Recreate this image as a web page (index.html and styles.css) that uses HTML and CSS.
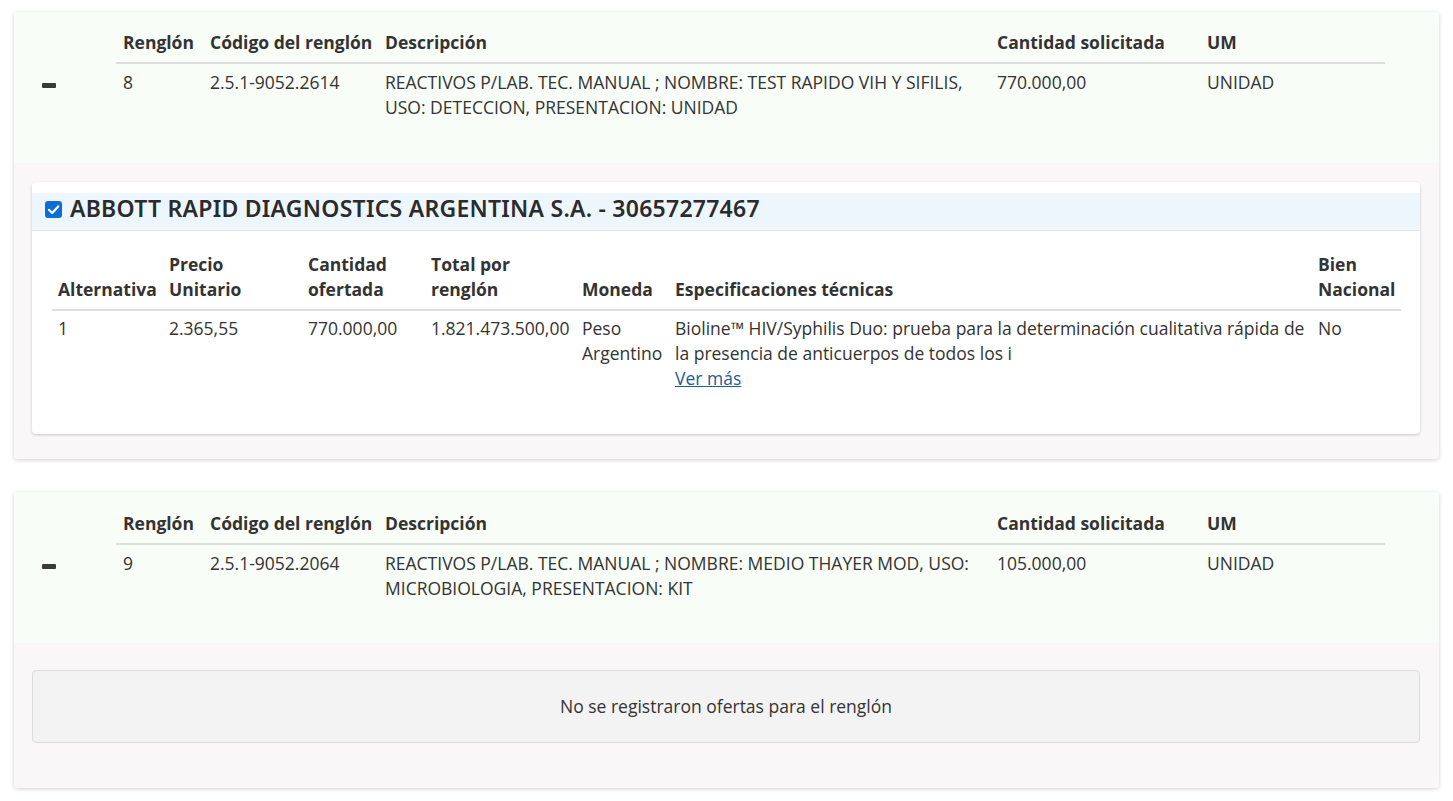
FILE: index.html
```html
<!DOCTYPE html>
<html lang="es">
<head>
<meta charset="utf-8">
<title>Renglones</title>
<link rel="stylesheet" href="styles.css">
</head>
<body>
<div class="item-card">
  <div class="item-head">
    <div class="toggle"><span class="minus"></span></div>
    <table class="item-table">
      <colgroup><col class="c1"><col class="c2"><col class="c3"><col class="c4"><col></colgroup>
      <thead><tr><th>Renglón</th><th>Código del renglón</th><th>Descripción</th><th>Cantidad solicitada</th><th>UM</th></tr></thead>
      <tbody><tr><td>8</td><td>2.5.1-9052.2614</td><td>REACTIVOS P/LAB. TEC. MANUAL ; NOMBRE: TEST RAPIDO VIH Y SIFILIS, USO: DETECCION, PRESENTACION: UNIDAD</td><td>770.000,00</td><td>UNIDAD</td></tr></tbody>
    </table>
  </div>
  <div class="item-body">
    <div class="offer-card">
      <div class="offer-title">
        <span class="check"><svg width="17" height="17" viewBox="0 0 17 17"><rect x="0" y="0" width="17" height="17" rx="3" fill="#0b6ed8"/><path d="M4 8.8 L7.2 12 L13.2 5.4" fill="none" stroke="#fff" stroke-width="2.2" stroke-linecap="round" stroke-linejoin="round"/></svg></span>
        <span class="offer-name">ABBOTT RAPID DIAGNOSTICS ARGENTINA S.A. - 30657277467</span>
      </div>
      <table class="offer-table">
        <colgroup><col class="o1"><col class="o2"><col class="o3"><col class="o4"><col class="o5"><col class="o6"><col></colgroup>
        <thead><tr><th>Alternativa</th><th>Precio Unitario</th><th>Cantidad ofertada</th><th>Total por renglón</th><th>Moneda</th><th>Especificaciones técnicas</th><th>Bien Nacional</th></tr></thead>
        <tbody><tr><td>1</td><td>2.365,55</td><td>770.000,00</td><td>1.821.473.500,00</td><td>Peso Argentino</td><td class="spec">Bioline™ HIV/Syphilis Duo: prueba para la determinación cualitativa rápida de<br>la presencia de anticuerpos de todos los i<br><a href="#" class="more">Ver más</a></td><td>No</td></tr></tbody>
      </table>
    </div>
  </div>
</div>

<div class="item-card second">
  <div class="item-head">
    <div class="toggle"><span class="minus"></span></div>
    <table class="item-table">
      <colgroup><col class="c1"><col class="c2"><col class="c3"><col class="c4"><col></colgroup>
      <thead><tr><th>Renglón</th><th>Código del renglón</th><th>Descripción</th><th>Cantidad solicitada</th><th>UM</th></tr></thead>
      <tbody><tr><td>9</td><td>2.5.1-9052.2064</td><td>REACTIVOS P/LAB. TEC. MANUAL ; NOMBRE: MEDIO THAYER MOD, USO: MICROBIOLOGIA, PRESENTACION: KIT</td><td>105.000,00</td><td>UNIDAD</td></tr></tbody>
    </table>
  </div>
  <div class="item-body empty">
    <div class="no-offers">No se registraron ofertas para el renglón</div>
  </div>
</div>
</body>
</html>
```

FILE: styles.css
```css
* { box-sizing: border-box; }
html, body { margin: 0; padding: 0; background: #ffffff; }
body {
  font-family: "Open Sans", "Noto Sans", sans-serif;
  font-size: 17.5px;
  line-height: 25px;
  color: #333333;
  padding: 12px 14px 0 14px;
}
.item-card {
  border-radius: 4px;
  box-shadow: 0 1px 4px rgba(0,0,0,0.18);
  overflow: hidden;
  margin-bottom: 33px;
}
.item-head {
  background: #f8fdf8;
  display: flex;
  height: 151px;
  padding: 10px 54px 0 0;
}
.second .item-head { padding-top: 11px; }
.toggle { width: 102px; flex: none; padding: 61px 0 0 28px; }
.minus {
  display: block;
  width: 14px;
  height: 5px;
  border-radius: 1px;
  background: #3a3a3a;
}
table { border-collapse: collapse; table-layout: fixed; }
th { text-align: left; font-weight: 700; vertical-align: bottom; }
td { vertical-align: top; }
.item-table { width: 1269px; }
.item-table th { padding: 8px 7px 7px; border-bottom: 2px solid #dedede; white-space: nowrap; }
.item-table td { padding: 6px 7px 8px; }
.c1 { width: 87px; }
.c2 { width: 175px; }
.c3 { width: 612px; }
.c4 { width: 210px; }

.item-body { background: #f9f7f7; padding: 19px 19px 25px 18px; }
.offer-card {
  background: #ffffff;
  border-radius: 4px;
  box-shadow: 0 1px 3px rgba(0,0,0,0.2);
  padding: 11px 0 35px 0;
}
.offer-title {
  display: flex;
  align-items: flex-start;
  gap: 8px;
  background: #eef6fd;
  border-bottom: 1px solid #dde6ee;
  height: 38px;
  padding-left: 13px;
}
.check { display: flex; width: 17px; height: 17px; margin-top: 8px; }
.offer-name {
  font-family: "Noto Sans", "Open Sans", sans-serif;
  font-weight: 600;
  font-size: 23px;
  letter-spacing: 0.25px;
  color: #2b2b2b;
  line-height: 30px;
}
.offer-table { width: 1349px; margin: 14px 0 0 20px; }
.offer-table th { padding: 7px 6px; border-bottom: 2px solid #dedede; }
.offer-table td { padding: 5px 6px 8px; }
.offer-table .spec { white-space: nowrap; }
.o1 { width: 111px; }
.o2 { width: 139px; }
.o3 { width: 123px; }
.o4 { width: 151px; }
.o5 { width: 93px; }
.o6 { width: 643px; }
.more { color: #1b5e8e; text-decoration: underline; }

.item-body.empty { padding: 27px 19px 45px 18px; }
.no-offers {
  background: #f3f3f3;
  border: 1px solid #dcdcdc;
  border-radius: 4px;
  height: 73px;
  display: flex;
  align-items: center;
  justify-content: center;
}
```
